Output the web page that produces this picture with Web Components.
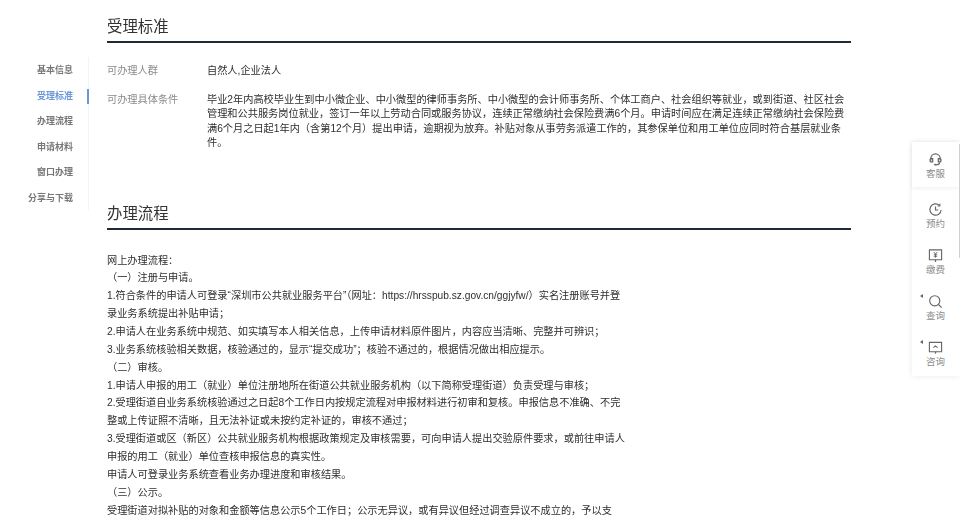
<!DOCTYPE html>
<html lang="zh-CN">
<head>
<meta charset="utf-8">
<title>受理标准</title>
<style>
  html, body { margin: 0; height: 100%; overflow: hidden; background: #fff; }
  body {
    font-family: "Liberation Sans", "Noto Sans CJK SC", sans-serif;
    color: #333;
  }
  .page { display: flex; align-items: flex-start; height: 100%; filter: blur(.3px); }
  .content { width: 744px; margin-left: 18px; flex: none; }
</style>
</head>
<body>
<template id="side-nav-tpl">
  <style>
    :host { display: block; width: 89px; margin-top: 57px; flex: none; box-sizing: border-box;
      height: 153px; border-right: 1px solid #f3f4f5; padding-top: 1px; }
  </style>
  <slot></slot>
</template>

<template id="nav-item-tpl">
  <style>
    :host { display: block; height: 25.5px; line-height: 25px; padding-right: 15px; text-align: right;
      font-size: 9px; font-weight: 700; color: #777; position: relative; }
    :host([active]) { color: #6b97d8; }
    :host([active])::after { content: ""; position: absolute; right: -1px; top: 5px; width: 2px; height: 15px; background: #6b97d8; }
  </style>
  <slot></slot>
</template>

<template id="section-block-tpl">
  <style>
    :host { display: block; }
    h2 { margin: 0; height: 33px; line-height: 37px; padding-top: 8px; font-size: 15.4px; font-weight: 400; color: #333;
      border-bottom: 2px solid #1f2a38; }
  </style>
  <h2 id="title"></h2>
  <slot></slot>
</template>

<template id="info-row-tpl">
  <style>
    :host { display: grid; grid-template-columns: 100px 1fr; font-size: 10.2px; line-height: 14.5px; margin-bottom: 14px; }
    .label { color: #8a8a8a; }
    .value { color: #2e2e2e; }
  </style>
  <div class="label" id="label"></div>
  <div class="value"><slot></slot></div>
</template>

<template id="float-rail-tpl">
  <style>
    :host { display: block; position: absolute; right: 0; top: 142px; width: 48px; height: 234px; box-sizing: border-box; padding-right: 1px;
      background: #fff; box-shadow: 0 0 6px rgba(0,0,0,.09); }
    /* thin scrollbar thumb sitting on the window edge */
    :host::after { content: ""; position: absolute; right: 0; top: 2px; width: 1px; height: 114px; background: #cfcfcf; }
  </style>
  <slot></slot>
</template>

<template id="rail-item-tpl">
  <style>
    :host { display: flex; flex-direction: column; align-items: center; height: 46px; box-sizing: border-box; padding-top: 15px;
      font-size: 9.5px; line-height: 13px; color: #8c8c8c; position: relative; }
    :host([first]) { height: 45px; padding-top: 9.5px; box-shadow: 0 1px 4px rgba(0,0,0,.07); }
    :host([mark])::before { content: ""; position: absolute; left: 8px; top: 15px; border: 2.5px solid transparent;
      border-right: 3px solid #666; border-left: 0; }
    ::slotted(svg) { width: 15px; height: 15px; display: block; }
  </style>
  <slot name="icon"></slot>
  <span id="label"></span>
</template>

<div class="page">
  <side-nav>
    <nav-item>基本信息</nav-item>
    <nav-item active>受理标准</nav-item>
    <nav-item>办理流程</nav-item>
    <nav-item>申请材料</nav-item>
    <nav-item>窗口办理</nav-item>
    <nav-item>分享与下载</nav-item>
  </side-nav>
  <div class="content">
    <section-block title="受理标准">
      <div style="height:21px"></div>
      <info-row label="可办理人群">自然人,企业法人</info-row>
      <info-row label="可办理具体条件">毕业2年内高校毕业生到中小微企业、中小微型的律师事务所、中小微型的会计师事务所、个体工商户、社会组织等就业，或到街道、社区社会管理和公共服务岗位就业，签订一年以上劳动合同或服务协议，连续正常缴纳社会保险费满6个月。申请时间应在满足连续正常缴纳社会保险费满6个月之日起1年内（含第12个月）提出申请，逾期视为放弃。补贴对象从事劳务派遣工作的，其参保单位和用工单位应同时符合基层就业条件。</info-row>
    </section-block>
    <section-block title="办理流程" style="margin-top:36.5px">
      <flow-text>
        <p>网上办理流程：</p>
        <p>（一）注册与申请。</p>
        <p>1.符合条件的申请人可登录“深圳市公共就业服务平台”（网址：https://hrsspub.sz.gov.cn/ggjyfw/）实名注册账号并登录业务系统提出补贴申请；</p>
        <p>2.申请人在业务系统中规范、如实填写本人相关信息，上传申请材料原件图片，内容应当清晰、完整并可辨识；</p>
        <p>3.业务系统核验相关数据，核验通过的，显示“提交成功”；核验不通过的，根据情况做出相应提示。</p>
        <p>（二）审核。</p>
        <p>1.申请人申报的用工（就业）单位注册地所在街道公共就业服务机构（以下简称受理街道）负责受理与审核；</p>
        <p>2.受理街道自业务系统核验通过之日起8个工作日内按规定流程对申报材料进行初审和复核。申报信息不准确、不完整或上传证照不清晰，且无法补证或未按约定补证的，审核不通过；</p>
        <p>3.受理街道或区（新区）公共就业服务机构根据政策规定及审核需要，可向申请人提出交验原件要求，或前往申请人申报的用工（就业）单位查核申报信息的真实性。</p>
        <p>申请人可登录业务系统查看业务办理进度和审核结果。</p>
        <p>（三）公示。</p>
        <p>受理街道对拟补贴的对象和金额等信息公示5个工作日；公示无异议，或有异议但经过调查异议不成立的，予以支</p>
      </flow-text>
    </section-block>
  </div>
</div>

<float-rail>
  <rail-item label="客服" first>
    <svg slot="icon" viewBox="0 0 16 16" fill="none" stroke="#666" stroke-width="1.3"><path d="M3 9V7a5 5 0 0 1 10 0v2"/><path d="M5 7H3.200a1 1 0 0 0-1 1v1.500a1 1 0 0 0 1 1H5z"/><path d="M11 7h1.800a1 1 0 0 1 1 1v1.500a1 1 0 0 1-1 1H11z"/><path d="M12.500 11c-.3 1.500-1.500 2.500-3 2.500"/><ellipse cx="8" cy="13.500" rx="1.600" ry="1" fill="#666" stroke="none"/></svg>
  </rail-item>
  <rail-item label="预约">
    <svg slot="icon" viewBox="0 0 16 16" fill="none" stroke="#666" stroke-width="1.2"><path d="M14 8.500A6 6 0 1 1 12.200 3.700"/><path d="M12.600 1.800v2.400h-2.400"/><path d="M8 4.800V8.500h3"/></svg>
  </rail-item>
  <rail-item label="缴费">
    <svg slot="icon" viewBox="0 0 16 16" fill="none" stroke="#666" stroke-width="1.200"><path d="M1.500 2h13v10.500h-13z"/><path d="M8 12.500v2.300" stroke-width="1.400"/><path d="M6.200 4.300L8 6.500l1.800-2.200M8 6.500v3.800M6.200 7.200h3.600M6.200 8.800h3.600" stroke-width="1"/></svg>
  </rail-item>
  <rail-item label="查询" mark>
    <svg slot="icon" viewBox="0 0 16 16" fill="none" stroke="#666" stroke-width="1.2"><circle cx="7.200" cy="7.200" r="5.400"/><path d="M11.200 11.200l3.300 3.300"/></svg>
  </rail-item>
  <rail-item label="咨询" mark>
    <svg slot="icon" viewBox="0 0 16 16" fill="none" stroke="#666" stroke-width="1.200"><path d="M1.500 2.500h13v10H1.500z"/><path d="M8 12.500v2" stroke-width="1.400"/><path d="M5.800 8.200L8 6.300l2.200 1.900"/></svg>
  </rail-item>
</float-rail>

<script>
  // all the small elements share the same clone-from-template setup
  class TplElement extends HTMLElement {
    constructor() {
      super();
      const tpl = document.getElementById(this.constructor.tpl);
      this.attachShadow({ mode: 'open' }).appendChild(tpl.content.cloneNode(true));
    }
  }

  class SideNav extends TplElement { static tpl = 'side-nav-tpl'; }
  class NavItem extends TplElement { static tpl = 'nav-item-tpl'; }
  class FloatRail extends TplElement { static tpl = 'float-rail-tpl'; }

  class SectionBlock extends TplElement {
    static tpl = 'section-block-tpl';
    connectedCallback() {
      this.shadowRoot.getElementById('title').textContent = this.getAttribute('title');
      this.removeAttribute('title');
    }
  }

  class LabelledElement extends TplElement {
    connectedCallback() {
      this.shadowRoot.getElementById('label').textContent = this.getAttribute('label');
    }
  }
  class InfoRow extends LabelledElement { static tpl = 'info-row-tpl'; }
  class RailItem extends LabelledElement { static tpl = 'rail-item-tpl'; }

  class FlowText extends HTMLElement {
    constructor() {
      super();
      const shadow = this.attachShadow({ mode: 'open' });
      shadow.innerHTML = `
        <style>
          :host { display: block; width: 520px; margin-top: 21.5px; font-size: 10.2px; line-height: 17.86px; color: #2e2e2e; }
          ::slotted(p) { margin: 0; }
        </style>
        <slot></slot>
      `;
    }
  }

  customElements.define('side-nav', SideNav);
  customElements.define('nav-item', NavItem);
  customElements.define('section-block', SectionBlock);
  customElements.define('info-row', InfoRow);
  customElements.define('flow-text', FlowText);
  customElements.define('float-rail', FloatRail);
  customElements.define('rail-item', RailItem);
</script>
</body>
</html>
